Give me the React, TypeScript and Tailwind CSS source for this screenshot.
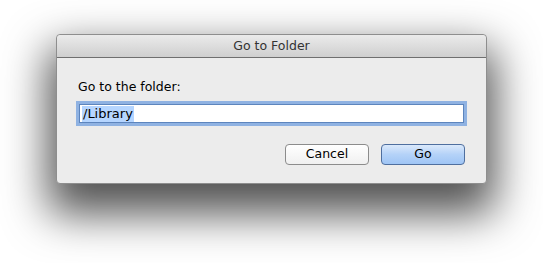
import React from 'react';

const font = { fontFamily: '"DejaVu Sans", "Liberation Sans", sans-serif' };

const App = () => {
  return (
    <div className="w-[543px] h-[263px] bg-white overflow-hidden pl-[56px] pt-[34px]" style={font}>
      <div className="w-[431px] h-[150px] flex flex-col rounded-[4px] border border-[#8e8e8e] bg-[#ececec] shadow-[0_22px_44px_8px_rgba(0,0,0,0.68)]">
        <div className="h-[23px] shrink-0 flex items-center justify-center rounded-t-[4px] border-b border-[#6f6f6f] bg-gradient-to-b from-[#ebebeb] to-[#cfcfcf] text-[12.5px] text-[#333]">
          Go to Folder
        </div>
        <div className="flex-1 flex flex-col px-[21px] pt-[21px]">
          <div className="text-[12.5px] text-black leading-[15px]">Go to the folder:</div>
          <div className="mt-[10px] h-[19px] mx-[1px] bg-white border border-[#5d85bd] shadow-[0_0_0_3px_#8fb2e2] flex items-center pl-[2px]">
            <span className="bg-[#b5d5ff] text-[13px] leading-[16px] px-[1px] text-black">/Library</span>
          </div>
          <div className="mt-[21px] flex justify-end gap-[12px]">
            <button className="w-[84px] h-[21px] rounded-[4px] border border-[#8c8c8c] bg-gradient-to-b from-white to-[#f0f0f0] text-[12.5px] text-black leading-none">
              Cancel
            </button>
            <button className="w-[84px] h-[21px] rounded-[4px] border border-[#4f6f9f] bg-gradient-to-b from-[#dbe9fb] via-[#b4d2f8] to-[#9fc5f5] text-[12.5px] text-black leading-none">
              Go
            </button>
          </div>
        </div>
      </div>
    </div>
  );
};

export default App;
